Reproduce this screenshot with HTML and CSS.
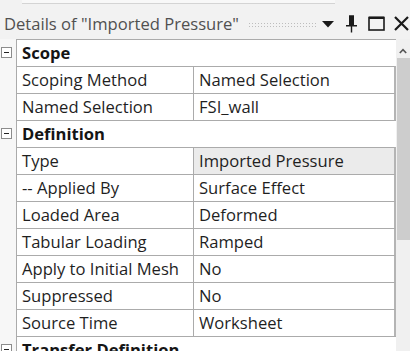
FILE: index.html
```html
<!DOCTYPE html>
<html>
<head>
<meta charset="utf-8">
<link rel="stylesheet" href="styles.css">
</head>
<body>
<div class="topstrip"><div class="prev"></div></div>
<div class="titlebar">
  <span class="title">Details of "Imported Pressure"</span>
  <span class="grip"></span>
  <svg class="ico drop" width="12" height="7" viewBox="0 0 12 7"><path d="M0 0H12L6 6.5Z" fill="#1a1a1a"/></svg>
  <svg class="ico pin" width="13" height="18" viewBox="0 0 13 18"><path d="M4 1H9V10H4Z M1 10H12V11.5H1Z M5.8 11.5H7.2V17.5H5.8Z" fill="#1a1a1a"/><path d="M4 1H9" stroke="#1a1a1a" stroke-width="1.5"/></svg>
  <svg class="ico max" width="17" height="15" viewBox="0 0 17 15"><rect x="1" y="1.5" width="15" height="12.5" fill="none" stroke="#1a1a1a" stroke-width="1.6"/><path d="M1 1.8H16" stroke="#1a1a1a" stroke-width="2.4"/></svg>
  <svg class="ico close" width="15" height="15" viewBox="0 0 15 15"><path d="M1 1L14 14M14 1L1 14" stroke="#1a1a1a" stroke-width="2.2"/></svg>
</div>
<div class="panel">
  <div class="grid">
    <div class="row"><div class="exp"><span class="box"></span></div><div class="cells head">Scope</div></div>
    <div class="row"><div class="exp"></div><div class="cells"><div class="lab">Scoping Method</div><div class="val">Named Selection</div></div></div>
    <div class="row"><div class="exp"></div><div class="cells"><div class="lab">Named Selection</div><div class="val">FSI_wall</div></div></div>
    <div class="row"><div class="exp"><span class="box"></span></div><div class="cells head">Definition</div></div>
    <div class="row"><div class="exp"></div><div class="cells"><div class="lab">Type</div><div class="val sel">Imported Pressure</div></div></div>
    <div class="row"><div class="exp"></div><div class="cells"><div class="lab">-- Applied By</div><div class="val">Surface Effect</div></div></div>
    <div class="row"><div class="exp"></div><div class="cells"><div class="lab">Loaded Area</div><div class="val">Deformed</div></div></div>
    <div class="row"><div class="exp"></div><div class="cells"><div class="lab">Tabular Loading</div><div class="val">Ramped</div></div></div>
    <div class="row"><div class="exp"></div><div class="cells"><div class="lab">Apply to Initial Mesh</div><div class="val">No</div></div></div>
    <div class="row"><div class="exp"></div><div class="cells"><div class="lab">Suppressed</div><div class="val">No</div></div></div>
    <div class="row"><div class="exp"></div><div class="cells"><div class="lab">Source Time</div><div class="val">Worksheet</div></div></div>
    <div class="row"><div class="exp"><span class="box"></span></div><div class="cells head">Transfer Definition</div></div>
  </div>
  <div class="scroll">
    <div class="arrow"><svg width="8" height="6" viewBox="0 0 8 6"><path d="M0.8 5L4 1.6L7.2 5" fill="none" stroke="#555" stroke-width="1.6"/></svg></div>
    <div class="thumb"></div>
  </div>
</div>
</body>
</html>
```
FILE: styles.css
```css
html, body {
  margin: 0;
  padding: 0;
}
body {
  width: 410px;
  height: 351px;
  overflow: hidden;
  background: #f2f2f2;
  font-family: "Open Sans", "Noto Sans", sans-serif;
  font-size: 16.6px;
  color: #1f1f1f;
}
.topstrip {
  height: 8px;
  display: flex;
}
.prev {
  margin-left: 22px;
  width: 313px;
  height: 3px;
  background: #f8f8f8;
  border-bottom: 1px solid #d4d4d4;
}
.titlebar {
  height: 31px;
  display: flex;
  align-items: center;
  padding-left: 4px;
  box-sizing: border-box;
}
.title {
  color: #505050;
  font-size: 16.6px;
  white-space: nowrap;
  line-height: 20px;
  margin-top: 1px;
}
.grip {
  width: 68px;
  height: 6px;
  margin-left: 9px;
  margin-top: 2px;
  background-image: radial-gradient(circle, #bdbdbd 0.7px, transparent 1px);
  background-size: 3px 3px;
}
.ico { display: block; flex: none; }
.drop { margin-left: 6px; margin-top: 1px; }
.pin { margin-left: 11px; }
.max { margin-left: 10px; }
.close { margin-left: 9px; }
.panel {
  display: flex;
  height: 312px;
}
.grid {
  width: 396px;
  display: flex;
  flex-direction: column;
}
.row {
  display: flex;
  height: 27px;
  flex: none;
}
.exp {
  width: 16px;
  flex: none;
  position: relative;
  background: #f7f7f7;
}
.box {
  position: absolute;
  left: 1px;
  top: 8px;
  width: 9px;
  height: 9px;
  border: 1px solid #8c8c8c;
  background: #fff;
}
.box::after {
  content: "";
  position: absolute;
  left: 2px;
  top: 4px;
  width: 5px;
  height: 1px;
  background: #222;
}
.cells {
  flex: none;
  width: 377px;
  display: flex;
  border-top: 1px solid #ababab;
  border-left: 1px solid #ababab;
  border-right: 2px solid #b4b4b4;
  background: #fff;
  line-height: 26px;
  white-space: nowrap;
}
.head {
  font-weight: 700;
  padding-left: 5px;
  color: #151515;
}
.lab {
  width: 171px;
  padding-left: 5px;
  flex: none;
}
.val {
  flex: 1;
  border-left: 1px solid #ababab;
  padding-left: 5px;
}
.val.sel {
  background: #ebebeb;
}
.scroll {
  width: 14px;
  display: flex;
  flex-direction: column;
  background: #f0f0f0;
}
.arrow {
  height: 19px;
  display: flex;
  justify-content: center;
  align-items: center;
  padding-top: 4px;
  box-sizing: border-box;
}
.thumb {
  height: 182px;
  background: #cdcdcd;
  margin-left: 1px;
}
```
